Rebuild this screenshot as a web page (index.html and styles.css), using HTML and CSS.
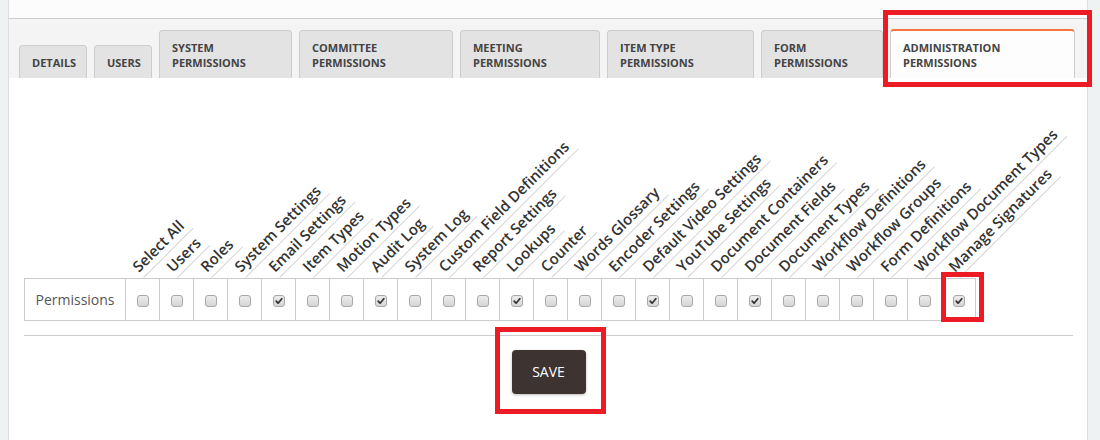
FILE: index.html
```html
<!DOCTYPE html>
<html lang="en">
<head>
<meta charset="utf-8">
<title>Administration Permissions</title>
<link rel="stylesheet" href="styles.css">
</head>
<body>
<div class="page">
  <div class="topbar"></div>
  <div class="tabs">
    <div class="tab w-details">DETAILS</div>
    <div class="tab w-users">USERS</div>
    <div class="tab w-system">SYSTEM<br>PERMISSIONS</div>
    <div class="tab w-committee">COMMITTEE<br>PERMISSIONS</div>
    <div class="tab w-meeting">MEETING<br>PERMISSIONS</div>
    <div class="tab w-itemtype">ITEM TYPE<br>PERMISSIONS</div>
    <div class="tab w-form">FORM<br>PERMISSIONS</div>
    <div class="tab active w-admin">ADMINISTRATION<br>PERMISSIONS</div>
  </div>
  <div class="panel">
    <table class="perm">
      <colgroup>
        <col class="c-label">
        <col class="c-box"><col class="c-box"><col class="c-box"><col class="c-box"><col class="c-box">
        <col class="c-box"><col class="c-box"><col class="c-box"><col class="c-box"><col class="c-box">
        <col class="c-box"><col class="c-box"><col class="c-box"><col class="c-box"><col class="c-box">
        <col class="c-box"><col class="c-box"><col class="c-box"><col class="c-box"><col class="c-box">
        <col class="c-box"><col class="c-box"><col class="c-box"><col class="c-box"><col class="c-box">
      </colgroup>
      <thead>
        <tr>
          <th></th>
          <th><span class="rl">Select All</span></th>
          <th><span class="rl">Users</span></th>
          <th><span class="rl">Roles</span></th>
          <th><span class="rl">System Settings</span></th>
          <th><span class="rl">Email Settings</span></th>
          <th><span class="rl">Item Types</span></th>
          <th><span class="rl">Motion Types</span></th>
          <th><span class="rl">Audit Log</span></th>
          <th><span class="rl">System Log</span></th>
          <th><span class="rl">Custom Field Definitions</span></th>
          <th><span class="rl">Report Settings</span></th>
          <th><span class="rl">Lookups</span></th>
          <th><span class="rl">Counter</span></th>
          <th><span class="rl">Words Glossary</span></th>
          <th><span class="rl">Encoder Settings</span></th>
          <th><span class="rl">Default Video Settings</span></th>
          <th><span class="rl">YouTube Settings</span></th>
          <th><span class="rl">Document Containers</span></th>
          <th><span class="rl">Document Fields</span></th>
          <th><span class="rl">Document Types</span></th>
          <th><span class="rl">Workflow Definitions</span></th>
          <th><span class="rl">Workflow Groups</span></th>
          <th><span class="rl">Form Definitions</span></th>
          <th><span class="rl">Workflow Document Types</span></th>
          <th><span class="rl">Manage Signatures</span></th>
        </tr>
      </thead>
      <tbody>
        <tr>
          <td class="rowname">Permissions</td>
          <td><span class="cb"></span></td>
          <td><span class="cb"></span></td>
          <td><span class="cb"></span></td>
          <td><span class="cb"></span></td>
          <td><span class="cb on"><svg viewBox="0 0 12 12"><path d="M2.6 6.2 L4.9 8.6 L9.4 3.2"/></svg></span></td>
          <td><span class="cb"></span></td>
          <td><span class="cb"></span></td>
          <td><span class="cb on"><svg viewBox="0 0 12 12"><path d="M2.6 6.2 L4.9 8.6 L9.4 3.2"/></svg></span></td>
          <td><span class="cb"></span></td>
          <td><span class="cb"></span></td>
          <td><span class="cb"></span></td>
          <td><span class="cb on"><svg viewBox="0 0 12 12"><path d="M2.6 6.2 L4.9 8.6 L9.4 3.2"/></svg></span></td>
          <td><span class="cb"></span></td>
          <td><span class="cb"></span></td>
          <td><span class="cb"></span></td>
          <td><span class="cb on"><svg viewBox="0 0 12 12"><path d="M2.6 6.2 L4.9 8.6 L9.4 3.2"/></svg></span></td>
          <td><span class="cb"></span></td>
          <td><span class="cb"></span></td>
          <td><span class="cb on"><svg viewBox="0 0 12 12"><path d="M2.6 6.2 L4.9 8.6 L9.4 3.2"/></svg></span></td>
          <td><span class="cb"></span></td>
          <td><span class="cb"></span></td>
          <td><span class="cb"></span></td>
          <td><span class="cb"></span></td>
          <td><span class="cb"></span></td>
          <td><span class="cb on"><svg viewBox="0 0 12 12"><path d="M2.6 6.2 L4.9 8.6 L9.4 3.2"/></svg></span></td>
        </tr>
      </tbody>
    </table>
    <hr class="divider">
    <div class="actions"><button class="save" type="button">SAVE</button></div>
  </div>
  <div class="hl hl-tab"></div>
  <div class="hl hl-save"></div>
  <div class="hl hl-check"></div>
</div>
</body>
</html>
```
FILE: styles.css
```css
* { box-sizing: border-box; }
html, body { margin: 0; height: 100%; overflow: hidden; }
body {
  background: #eef2f2;
  font-family: "Open Sans", "Liberation Sans", sans-serif;
  color: #444;
}
.page {
  position: relative;
  margin: 0 12px 0 8px;
  height: 440px;
  background: #fff;
  border-left: 1px solid #dcdfdf;
  border-right: 1px solid #dcdfdf;
}
.topbar {
  height: 19px;
  background: #fcfcfc;
  border-bottom: 1px solid #cfcfcf;
}
.tabs {
  display: flex;
  align-items: flex-end;
  gap: 7px;
  height: 59px;
  padding-left: 10px;
  background: #f4f4f4;
}
.tab {
  padding: 9px 0 8px 12px;
  font-size: 11px;
  line-height: 15px;
  font-weight: 700;
  color: #444;
  background: #e3e3e3;
  border: 1px solid #cdcdcd;
  border-bottom: 0;
  border-radius: 4px 4px 0 0;
  white-space: nowrap;
}
.tab.active {
  background: #fdfdfd;
  border-top: 2px solid #f4733f;
}
.w-details { width: 68px; }
.w-users { width: 58px; }
.w-system { width: 133px; }
.w-committee { width: 154px; }
.w-meeting { width: 140px; }
.w-itemtype { width: 147px; }
.w-form { width: 122px; }
.w-admin { width: 185px; }

.panel { padding: 0 14px 0 15px; }
.perm {
  border-collapse: collapse;
  table-layout: fixed;
  width: 951px;
}
.c-label { width: 101px; }
.c-box { width: 34px; }
.perm th {
  height: 200px;
  padding: 0;
  vertical-align: bottom;
  text-align: left;
}
.rl {
  display: block;
  width: max-content;
  white-space: nowrap;
  font-size: 15px;
  line-height: 18px;
  font-weight: 600;
  color: #333;
  padding: 0 5px 3px 0;
  border-bottom: 1px solid #d6d6d6;
  transform-origin: 0 100%;
  transform: translate(18px, 0) rotate(-45deg);
}
.perm td {
  border: 1px solid #cccccc;
  height: 42px;
  padding: 0;
  text-align: center;
  vertical-align: middle;
}
.perm td.rowname {
  font-size: 14px;
  color: #555;
}
.cb {
  display: inline-block;
  width: 12px;
  height: 12px;
  border: 1px solid #a9a9a9;
  border-radius: 3px;
  background: linear-gradient(#ececec, #d5d5d5);
  vertical-align: middle;
}
.cb svg {
  display: block;
  width: 10px;
  height: 10px;
}
.cb svg path {
  fill: none;
  stroke: #2f2f2f;
  stroke-width: 2;
  stroke-linecap: round;
  stroke-linejoin: round;
}
.divider {
  border: 0;
  border-top: 1px solid #cccccc;
  margin: 14px 0 0;
}
.actions {
  display: flex;
  justify-content: center;
  padding-top: 14px;
}
.save {
  width: 74px;
  height: 44px;
  background: #3d3331;
  color: #fff;
  border: 0;
  border-radius: 4px;
  font-family: "Open Sans", "Liberation Sans", sans-serif;
  font-size: 14px;
  box-shadow: 0 1px 3px rgba(0, 0, 0, 0.25);
}
.hl {
  position: absolute;
  border: 5px solid #ed1c24;
}
.hl-tab { left: 874px; top: 10px; width: 209px; height: 77px; }
.hl-save { left: 486px; top: 327px; width: 111px; height: 87px; }
.hl-check { left: 932px; top: 272px; width: 43px; height: 50px; }
```
